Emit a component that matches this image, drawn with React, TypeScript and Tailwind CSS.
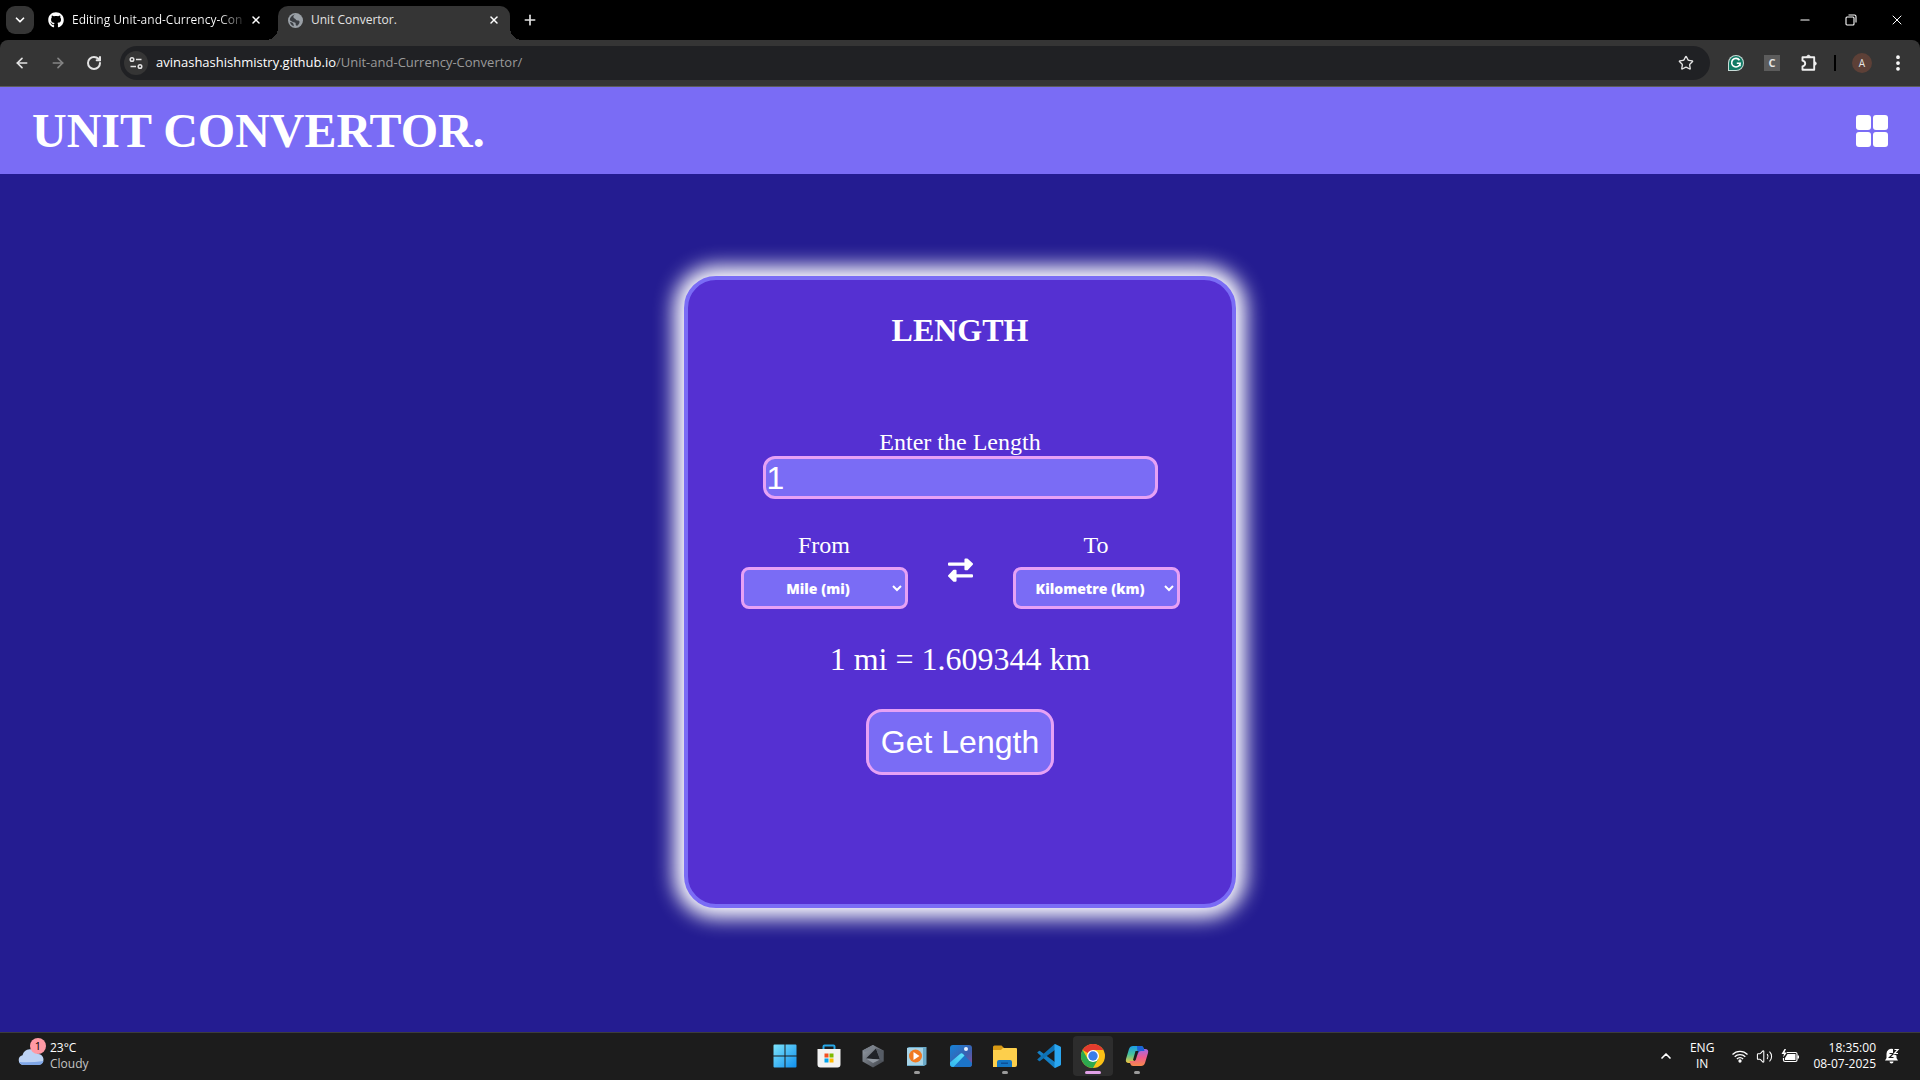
import React from "react";
import { FaGithub } from "react-icons/fa";
import { ArrowLeft, ArrowRight, RotateCw, X, Plus, ChevronDown, ChevronUp, Star, Minus, Volume2, MoreVertical } from "lucide-react";

function TabShape() {
  return (
    <>
      <span className="absolute bottom-0 -left-3 size-3 bg-[radial-gradient(circle_at_0_0,transparent_12px,#353535_12px)]" />
      <span className="absolute bottom-0 -right-3 size-3 bg-[radial-gradient(circle_at_100%_0,transparent_12px,#353535_12px)]" />
    </>
  );
}

function GlobeIcon() {
  return (
    <svg viewBox="0 0 16 16" className="size-[15px] shrink-0">
      <circle cx="8" cy="8" r="8" fill="#9aa0a6" />
      <path d="M9 1.600C6.500 1.200 5.500 3 5.800 4.500S8 6 8.500 7.200s2.500.3 3.500 1.300-.4 3.800-1.800 4.800c-1 .6-2.200 0-2-1.300s-.5-2-2-2.100S4 8.800 2 7.800C1.800 4.500 5 1.500 9 1.600ZM2 9.500c2 .2 3.500.8 3.800 2.200s.6 1.800.2 2.300C4 13.200 2.500 11.500 2 9.500Z" fill="#3a3d42" />
    </svg>
  );
}

function TuneIcon() {
  return (
    <svg viewBox="0 0 14 14" className="size-3.5" fill="none" stroke="#e3e3e3" strokeWidth="1.500">
      <circle cx="3" cy="3.500" r="1.800" />
      <path d="M7 3.500H12.500M1.500 10.500H7" />
      <circle cx="11" cy="10.500" r="1.800" />
    </svg>
  );
}

function TabStrip() {
  return (
    <div className="flex h-10 items-end bg-black pl-1.5 text-[12px] text-[#e3e3e3]">
      <button aria-label="Search tabs" className="mb-1.5 flex h-7 w-7 items-center justify-center rounded-[9px] bg-[#353535] text-white">
        <ChevronDown className="size-3.5" strokeWidth={3} />
      </button>
      <div className="flex h-10 w-[244px] items-center pl-3.5">
        <FaGithub className="size-4 shrink-0 text-white" />
        <span className="ml-2 shrink-0 whitespace-nowrap bg-[linear-gradient(90deg,#fff_86%,#333)] bg-clip-text text-transparent">Editing Unit-and-Currency-Con</span>
        <button aria-label="Close tab" className="ml-auto mr-4 text-white"><X className="size-3" strokeWidth={3} /></button>
      </div>
      <div className="relative flex h-[34px] w-[232px] items-center rounded-t-[10px] bg-[#353535] px-2.5 pb-1.5">
        <TabShape />
        <GlobeIcon />
        <span className="ml-2 flex-1">Unit Convertor.</span>
        <button aria-label="Close tab" className="text-white"><X className="size-3" strokeWidth={3} /></button>
      </div>
      <button aria-label="New tab" className="mb-3 ml-3"><Plus className="size-4" strokeWidth={2.5} /></button>
      <div className="ml-auto flex h-10 text-white">
        <button aria-label="Minimize" className="flex w-[46px] items-center justify-center"><Minus className="size-3.5" strokeWidth={2} /></button>
        <button aria-label="Restore" className="flex w-[46px] items-center justify-center">
          <svg viewBox="0 0 12 12" className="size-3" fill="none" stroke="white" strokeWidth="1.100">
            <rect x="1" y="3" width="8" height="8" rx="1" />
            <path d="M3.500 1H9.500Q11 1 11 2.500V8.500" />
          </svg>
        </button>
        <button aria-label="Close" className="flex w-[46px] items-center justify-center"><X className="size-4" strokeWidth={1.5} /></button>
      </div>
    </div>
  );
}

function Toolbar() {
  return (
    <div className="bg-black">
      <div className="flex h-[47px] items-center rounded-t-lg border-b border-[#5c5c5c] bg-[#353535] px-3 text-[#e3e3e3]">
        <button aria-label="Back" className="ml-0.5"><ArrowLeft className="size-4" strokeWidth={2.5} /></button>
        <button aria-label="Forward" className="ml-5 text-[#858585]"><ArrowRight className="size-4" strokeWidth={2.5} /></button>
        <button aria-label="Reload" className="ml-5"><RotateCw className="size-4" strokeWidth={3} /></button>
        <div className="ml-[18px] flex h-[34px] flex-1 items-center rounded-full bg-[#202124] pl-1 pr-4">
          <button aria-label="View site information" className="flex size-6 items-center justify-center rounded-full bg-[#353535]"><TuneIcon /></button>
          <a href="#top" className="ml-2 flex-1 text-[13px] text-[#9a9a9a]"><span className="text-white">avinashashishmistry.github.io</span>/Unit-and-Currency-Convertor/</a>
          <button aria-label="Bookmark this tab"><Star className="size-4" /></button>
        </div>
        <button aria-label="Grammarly" className="ml-[18px]">
          <svg viewBox="0 0 16 16" className="size-4">
            <path d="M0 16V8a8 8 0 1 1 8 8Z" fill="#c8dcd8" />
            <path d="M1 15V8a7 7 0 1 1 7 7Z" fill="#117a65" />
            <path d="M11.500 5.200A4.300 4.300 0 1 0 12.200 8.300H8.800M12 8.300v3" fill="none" stroke="white" strokeWidth="1.600" />
          </svg>
        </button>
        <button aria-label="Extension C" className="ml-5 flex size-4 items-center justify-center bg-[#5c5c5c] text-[11px] font-bold">C</button>
        <button aria-label="Extensions" className="ml-5">
          <svg viewBox="0 0 18 18" className="size-[18px]" fill="none" stroke="#f0f0f0" strokeWidth="1.900" strokeLinejoin="round">
            <path d="M2.500 3.200H14.200V15.800H2.500V12.300Q5.200 11.600 5.200 9.500T2.500 6.700Z" />
            <path d="M6.500 2.800Q7 1 8.500 1T10.500 2.800ZM14.500 7.500Q16.500 8 16.500 9.500T14.500 11.500Z" fill="#f0f0f0" strokeWidth=".5" />
          </svg>
        </button>
        <span className="ml-4 h-4 w-0.5 bg-black" />
        <button aria-label="Profile" className="ml-4 flex size-5 items-center justify-center rounded-full bg-[#5d4037] text-[10px]">A</button>
        <button aria-label="Menu" className="ml-4 text-white"><MoreVertical className="size-5" strokeWidth={2.5} /></button>
      </div>
    </div>
  );
}

function SwapIcon() {
  return (
    <svg viewBox="0 0 76 72" className="h-6 w-[25px]" fill="white" stroke="white" strokeWidth="6" strokeLinejoin="round">
      <path d="M3 16H53V4H58L73 18L58 34H53V20H3Z" />
      <path d="M73 52H23V38H18L3 54L18 69H23V56H73Z" />
    </svg>
  );
}

function UnitSelect({ id, label, options }: { id: string; label: string; options: string[] }) {
  return (
    <div className="flex flex-col items-center gap-2">
      <label htmlFor={id} className="text-[24px] leading-7">{label}</label>
      <select id={id} className="h-[42px] w-[167px] rounded-lg border-3 border-[#e6a1f5] bg-[#7a6cf5] text-center font-['Open_Sans',sans-serif] text-[14px] font-extrabold text-white">
        {options.map((o) => <option key={o}>{o}</option>)}
      </select>
    </div>
  );
}

function Converter() {
  return (
    <section className="flex h-[632px] w-[552px] flex-col items-center rounded-[32px] border-4 border-[#7a6cf5] bg-[#5530d2] pt-8 shadow-[0_0_20px_10px_white]">
      <h2 className="text-[32px] font-bold leading-9">LENGTH</h2>
      <label htmlFor="length" className="mt-20 text-[24px] leading-7">Enter the Length</label>
      <input id="length" defaultValue="1" className="h-[43px] w-[395px] rounded-xl border-3 border-[#e6a1f5] bg-[#7a6cf5] px-px font-['Liberation_Sans',sans-serif] text-[32px] text-white outline-none" />
      <div className="mt-8 flex items-center gap-10">
        <UnitSelect id="from" label="From" options={["Mile (mi)", "Metre (m)"]} />
        <button aria-label="Swap units"><SwapIcon /></button>
        <UnitSelect id="to" label="To" options={["Kilometre (km)", "Metre (m)"]} />
      </div>
      <output className="mt-8 text-[32px] leading-9">1 mi = 1.609344 km</output>
      <button className="mt-8 rounded-2xl border-3 border-[#e6a1f5] bg-[#7a6cf5] px-3 py-3 font-['Liberation_Sans',sans-serif] text-[32px] leading-9">Get Length</button>
    </section>
  );
}

const iconClass = "size-6";

function WindowsIcon() {
  return (
    <svg viewBox="0 0 24 24" className={iconClass}>
      <defs><linearGradient id="win" x1="0" y1="0" x2="1" y2="1"><stop stopColor="#7de4fb" /><stop offset="1" stopColor="#0f8fee" /></linearGradient></defs>
      <path d="M.5 1.500a1 1 0 0 1 1-1h10v11H.5ZM12.500.5h10a1 1 0 0 1 1 1v10h-11ZM.5 12.500h11v11h-10a1 1 0 0 1-1-1ZM12.500 12.500h11v10a1 1 0 0 1-1 1h-10Z" fill="url(#win)" />
    </svg>
  );
}

function StoreIcon() {
  return (
    <svg viewBox="0 0 24 24" className={iconClass}>
      <path d="M6.500 6V2.500a1 1 0 0 1 1-1h9a1 1 0 0 1 1 1V6" fill="none" stroke="#27a8e8" strokeWidth="2" />
      <path d="M.5 5h23v15.500a3 3 0 0 1-3 3h-17a3 3 0 0 1-3-3Z" fill="#f2f2f2" />
      <path d="M7.500 9.500h4v4h-4Z" fill="#f25022" /><path d="M12.500 9.500h4v4h-4Z" fill="#7fba00" />
      <path d="M7.500 14.500h4v4h-4Z" fill="#00a4ef" /><path d="M12.500 14.500h4v4h-4Z" fill="#ffb900" />
    </svg>
  );
}

function HexIcon() {
  return (
    <svg viewBox="0 0 24 24" className={iconClass}>
      <defs><linearGradient id="hex" x1="0" y1="0" x2="1" y2="1"><stop stopColor="#9aa1aa" /><stop offset="1" stopColor="#3c4047" /></linearGradient></defs>
      <path d="M12 1 22.500 6.500v11L12 23.500 1.500 17.500v-11Z" fill="url(#hex)" />
      <path d="M12 1 1.500 6.500 4 8 15 4.500Z" fill="#7b828c" />
      <path d="M15 4.500 19 15.500 5 14.500Z" fill="#202328" />
      <path d="M5 14.500 19 15.500 12 19Z" fill="#9198a1" />
      <path d="M15 4.500 22.500 6.500v11L19 15.500Z" fill="#565c65" />
    </svg>
  );
}

function PlayerIcon() {
  return (
    <svg viewBox="0 0 24 24" className={iconClass}>
      <path d="M4 3h17.500v17.500L19 22H2V4Z" fill="#6aa9c8" />
      <path d="M2 4h16v17H2Z" fill="#a7d3e6" />
      <circle cx="10.500" cy="12" r="6.500" fill="#f07a22" />
      <path d="M8.500 8v8l6-4Z" fill="white" />
    </svg>
  );
}

function PhotosIcon() {
  return (
    <svg viewBox="0 0 24 24" className={iconClass}>
      <defs>
        <linearGradient id="ph" x1="0" y1="0" x2="1" y2="1"><stop stopColor="#1683d8" /><stop offset=".6" stopColor="#3d5fae" /><stop offset="1" stopColor="#8f4f9c" /></linearGradient>
        <linearGradient id="ph2" x1="0" y1="1" x2="1" y2="0"><stop stopColor="#2fb2ee" /><stop offset="1" stopColor="#5fe6fb" /></linearGradient>
      </defs>
      <rect x="1" y="1" width="22" height="22" rx="3" fill="url(#ph)" />
      <path d="M11 10q1.500-1.300 3 0L23 19v1a3 3 0 0 1-3 3H4Z" fill="#1c74c8" />
      <path d="M1 18.500 11 10q1.500-1.300 3 0l1.500 1.500L4.500 23H4a3 3 0 0 1-3-3Z" fill="url(#ph2)" />
      <circle cx="17" cy="5" r="2" fill="#e9f4ff" />
    </svg>
  );
}

function FolderIcon() {
  return (
    <svg viewBox="0 0 24 24" className={iconClass}>
      <path d="M0 3q0-1.500 1.500-1.500h7L11 4v4H0Z" fill="#d99a14" />
      <path d="M0 6h8l2-2h13q1 0 1 1v16q0 2-2 2H0Z" fill="#fdcf4c" />
      <path d="M4 23v-5q0-2 2-2h11q2 0 2 2v5Z" fill="#1376c4" />
      <path d="M8 18.500h7v1.500H8Z" fill="#0d4f96" />
    </svg>
  );
}

function CodeIcon() {
  return (
    <svg viewBox="0 0 24 24" className={iconClass}>
      <path d="M.4 8.300 2 6.900q.5-.4 1 0L18.500 18.500V24q-1 0-1.700-.7L.4 8.700Z" fill="#1580c6" />
      <path d="M.4 15.700 2 17.100q.5.4 1 0L18.500 5.500V0q-1 0-1.700.7L.4 15.300Z" fill="#0e72b5" />
      <path d="M17.500.3Q18 0 18.600.3L23.300 2.600q.7.3.7 1v16.800q0 .7-.7 1L18.600 23.700q-.6.3-1.100 0Z" fill="#2aa6f0" />
    </svg>
  );
}

function ChromeIcon() {
  return (
    <svg viewBox="0 0 24 24" className={iconClass}>
      <circle cx="12" cy="12" r="12" fill="#fbc116" />
      <path d="M12 12 1.600 6A12 12 0 0 1 22.400 6H12Z" fill="#e33b2e" />
      <path d="M1.600 6A12 12 0 0 0 12 24l5.200-9L12 12 6.800 15Z" fill="#2da94f" />
      <circle cx="12" cy="12" r="6" fill="white" />
      <circle cx="12" cy="12" r="4.700" fill="#3a7de8" />
    </svg>
  );
}

function CopilotIcon() {
  return (
    <svg viewBox="0 0 24 24" className={iconClass}>
      <defs>
        <linearGradient id="cp1" x1="0" y1="0" x2="0" y2="1"><stop stopColor="#1b9de8" /><stop offset=".5" stopColor="#49c39a" /><stop offset="1" stopColor="#f2c63c" /></linearGradient>
        <linearGradient id="cp2" x1="0" y1="0" x2="0" y2="1"><stop stopColor="#a169e8" /><stop offset=".5" stopColor="#ee5b8e" /><stop offset="1" stopColor="#f78a4a" /></linearGradient>
      </defs>
      <path d="M8 2h8q2 0 2.600 2L19.500 7H16q-2 0-2.700 2l-2.500 8Q10 19 8 19H4q-4 0-3-4L4 5Q5 2 8 2Z" fill="url(#cp1)" />
      <path d="M16 22H8q-2 0-2.600-2L4.500 17H8q2 0 2.700-2l2.500-8q.8-2 2.800-2h4q4 0 3 4l-3 10q-1 3-4 3Z" fill="url(#cp2)" />
      <path d="M12 2h4q2 0 2.600 2l.9 3H16q-2 0-2.700 2L12.500 11Z" fill="#1b62d8" />
      <path d="M10.500 7h3L10.700 16 9.500 17 8 16Z" fill="#1c1c1c" />
    </svg>
  );
}

const apps = [
  { name: "Start", icon: <WindowsIcon />, state: "" },
  { name: "Store", icon: <StoreIcon />, state: "" },
  { name: "Armoury", icon: <HexIcon />, state: "" },
  { name: "Media player", icon: <PlayerIcon />, state: "open" },
  { name: "Photos", icon: <PhotosIcon />, state: "" },
  { name: "Files", icon: <FolderIcon />, state: "open" },
  { name: "Code", icon: <CodeIcon />, state: "" },
  { name: "Chrome", icon: <ChromeIcon />, state: "active" },
  { name: "Copilot", icon: <CopilotIcon />, state: "open" },
];

function Taskbar() {
  return (
    <footer className="grid h-12 grid-cols-[1fr_auto_1fr] items-center border-t border-[#3c3c3c] bg-[#1c1c1c] pb-px text-[12px] text-white">
      <button className="flex items-center gap-1.5 pl-[18px] text-left leading-4">
        <span className="relative">
          <svg viewBox="0 0 26 20" className="h-5 w-[26px]">
            <path d="M5 19a5 5 0 0 1-.5-9.800A8 8 0 0 1 19.500 8a5.500 5.500 0 0 1 1 11Z" fill="#bcd2f4" />
            <path d="M5 19a5 5 0 0 1-4-3Q12 17 25.500 15a5.500 5.500 0 0 1-5 4Z" fill="#7fa6e6" />
          </svg>
          <span className="absolute -top-2 -right-0.5 flex size-4 items-center justify-center rounded-full bg-[#ff99a4] text-[11px] text-black">1</span>
        </span>
        <span><span className="block">23°C</span><span className="block text-[#c4c4c4]">Cloudy</span></span>
      </button>
      <nav className="flex gap-1 pl-0.5">
        {apps.map((a) => (
          <button key={a.name} aria-label={a.name} className={a.state === "active" ? "relative flex size-10 items-center justify-center rounded bg-[#2d2d2d]" : "relative flex size-10 items-center justify-center rounded"}>
            {a.icon}
            {a.state === "open" && <span className="absolute bottom-0.5 h-[3px] w-1.5 rounded-full bg-[#9a9a9a]" />}
            {a.state === "active" && <span className="absolute bottom-0.5 h-[3px] w-4 rounded-full bg-[#e0a0e6]" />}
          </button>
        ))}
      </nav>
      <div className="flex items-center justify-end pr-5">
        <button aria-label="Show hidden icons"><ChevronUp className="size-4" strokeWidth={2.5} /></button>
        <span className="ml-4 text-center leading-4">ENG<br />IN</span>
        <span className="ml-[18px] flex items-center gap-2">
          <svg viewBox="0 0 16 14" className="h-3.5 w-4" fill="none" stroke="white" strokeWidth="1.300">
            <path d="M.5 5.500a10.500 10.500 0 0 1 15 0M2.700 7.800a7.400 7.400 0 0 1 10.600 0M4.900 10a4.300 4.300 0 0 1 6.200 0" />
            <circle cx="8" cy="12" r="1" fill="white" />
          </svg>
          <Volume2 className="size-[17px]" strokeWidth={1.5} />
          <svg viewBox="0 0 18 14" className="h-3.5 w-[18px]">
            <path d="M6 3.500h8.500q1.500 0 1.500 1.500v6q0 1.500-1.500 1.500H4Q2.500 12.500 2.500 11V9" fill="none" stroke="white" strokeWidth="1.200" />
            <path d="M6.500 5H14.500v6H4V9ZM16.500 6.500H18v3h-1.500ZM3.500 0 .5 5H3L2 8.500 6 3.500H3.500L5 0Z" fill="white" />
          </svg>
        </span>
        <span className="ml-3.5 text-right leading-4">18:35:00<br />08-07-2025</span>
        <svg viewBox="0 0 16 16" className="ml-2 size-4">
          <path d="M9 1A5 5 0 0 0 2.500 6v4L1 12.500h13L12.500 10V7.500L9 6ZM5.500 13.500h4a2 2 0 0 1-4 0Z" fill="white" />
          <path d="M5.500 5.500h4L5.500 9.500h4" fill="none" stroke="#1c1c1c" strokeWidth="1.200" />
          <path d="M10.500 1.500h3.500l-3.500 4H14" fill="none" stroke="white" strokeWidth="1.200" />
        </svg>
      </div>
    </footer>
  );
}

export default function App() {
  return (
    <div id="top" className="flex min-h-screen flex-col font-['Open_Sans',sans-serif]">
      <TabStrip />
      <Toolbar />
      <div className="flex flex-1 flex-col bg-[#241c91] font-['Liberation_Serif',serif] text-white">
        <header className="flex h-[87px] items-center justify-between bg-[#7a6cf5] px-8">
          <h1 className="text-[48px] font-bold leading-[56px]">UNIT CONVERTOR.</h1>
          <button aria-label="Open menu" className="grid grid-cols-2 gap-0.5">
            <span className="size-[15px] rounded-[3px] bg-white" />
            <span className="size-[15px] rounded-[3px] bg-white" />
            <span className="size-[15px] rounded-[3px] bg-white" />
            <span className="size-[15px] rounded-[3px] bg-white" />
          </button>
        </header>
        <main className="flex flex-1 items-center justify-center pb-[22px]">
          <Converter />
        </main>
      </div>
      <Taskbar />
    </div>
  );
}
